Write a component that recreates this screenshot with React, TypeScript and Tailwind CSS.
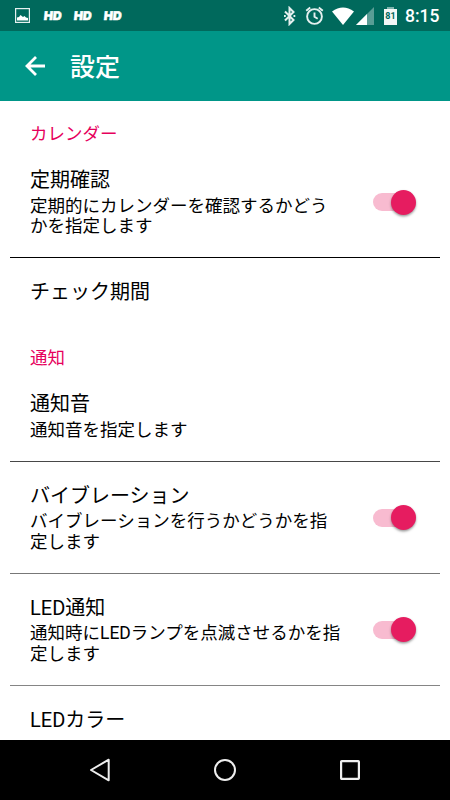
import type { ReactNode } from 'react'

interface SettingRowProps {
  title: string;
  summary?: string;
  hasSwitch?: boolean;
  divider?: string;
}

const Switch = () => {
  return (
    <div className="mb-px flex h-[25px] w-[43px] shrink-0 items-center">
      <div className="h-[18px] w-[38px] shrink-0 rounded-full bg-[#f8bbd0]" />
      <div className="-ml-[20px] h-[25px] w-[25px] shrink-0 rounded-full bg-[#e61c60] shadow-[0_1.5px_2.5px_rgba(0,0,0,0.4)]" />
    </div>
  )
}

const SettingRow: React.FC<SettingRowProps> = ({ title, summary, hasSwitch, divider }) => {
  return (
    <div className={`mx-[10px] flex items-center pb-5 pl-5 pr-[24px] pt-[22px] ${divider ? `border-b ${divider}` : ''}`}>
      <div className="min-w-0 flex-1">
        <h2 className="text-[20px] leading-6">{title}</h2>
        {summary && (
          <p className="mt-[3.5px] mb-[0.5px] max-w-[314px] whitespace-pre-line text-[17.5px] leading-[20.5px]">{summary}</p>
        )}
      </div>
      {hasSwitch && <Switch />}
    </div>
  )
}

const Category = ({ children, className }: { children: ReactNode; className: string }) => {
  return <h3 className={`px-[30px] text-[17.5px] leading-6 text-[#e6005c] ${className}`}>{children}</h3>
}

const StatusBar = () => {
  return (
    <div className="flex h-[31px] shrink-0 items-center justify-between bg-[#00695c] pl-[15px] pr-[10px] text-white">
      <div className="flex items-center">
        <svg width="15" height="15" viewBox="0 0 15 15">
          <rect x="0.6" y="0.6" width="13.8" height="13.8" fill="none" stroke="#e5f0ef" strokeWidth="1.2" />
          <path d="M2 12.500V9.500l2-.5 1.500-2L8 9l1.500-1L11 9.500l2 .5v2.500z" fill="#fff" />
        </svg>
        <div className="ml-[14px] flex gap-[11px] font-['Inter','Liberation_Sans',sans-serif] text-[12px] font-black leading-none [-webkit-text-stroke:0.5px_white]">
          <span className="w-[19px] -skew-x-6">HD</span>
          <span className="w-[19px] -skew-x-6">HD</span>
          <span className="w-[19px] -skew-x-6">HD</span>
        </div>
      </div>
      <div className="flex items-center">
        <svg width="13" height="20" viewBox="0 0 13 20" fill="none" stroke="#e5f0ef" strokeWidth="2">
          <path d="M2 5.500l8.500 8.500-4 4v-16l4 4-8.500 8.500" />
          <path d="M1 10h1.800M10.500 10h1.800" />
        </svg>
        <svg className="ml-[9px]" width="19" height="20" viewBox="0 0 19 20" fill="none" stroke="#e5f0ef" strokeWidth="1.9">
          <circle cx="9.5" cy="10.5" r="7.4" />
          <path d="M9.500 6.500v4.300l3.200 2M1.200 4.700l4-3.200M17.800 4.700l-4-3.200" />
        </svg>
        <svg className="ml-[8px]" width="22" height="18" viewBox="0 0 22 18">
          <path d="M0 4.500Q11-3.500 22 4.500L11 18z" fill="#fff" />
        </svg>
        <svg className="ml-[2px]" width="18" height="18" viewBox="0 0 18 18">
          <path d="M0 18L18 0v18z" fill="#fff" fillOpacity="0.35" />
          <path d="M0 18L11 7v11z" fill="#fff" />
        </svg>
        <div className="ml-[10px] flex w-[13px] flex-col items-center">
          <div className="h-[2px] w-[7px] bg-[#7fb4ad]" />
          <div className="flex h-[16px] w-full items-center justify-center bg-[#f2f7f6] pb-px font-['Roboto',sans-serif] text-[9px] font-bold leading-none text-[#00695c]">
            81
          </div>
        </div>
        <span className="ml-[8px] mt-[2px] w-[35px] whitespace-nowrap text-[17.5px] font-medium leading-none">8:15</span>
      </div>
    </div>
  )
}

const App = () => {
  return (
    <div className="flex h-[800px] w-[450px] flex-col overflow-hidden bg-white font-['Roboto','Noto_Sans_CJK_JP',sans-serif] text-black">
      <StatusBar />
      <header className="flex h-[70px] shrink-0 items-center bg-[#009688] pl-[25px] text-white">
        <svg width="20" height="20" viewBox="0 0 20 20" fill="none" stroke="#fff" strokeWidth="2.8">
          <path d="M20 10H2M11 1L2 10l9 9" />
        </svg>
        <h1 className="ml-[25px] mt-[3px] text-[25px] font-medium leading-8">設定</h1>
      </header>
      <main className="min-h-0 flex-1 overflow-hidden" lang="ja">
        <Category className="pt-[21px]">カレンダー</Category>
        <SettingRow
          title="定期確認"
          summary={'定期的にカレンダーを確認するかどう\nかを指定します'}
          hasSwitch
          divider="border-black"
        />
        <SettingRow title="チェック期間" />
        <Category className="pt-[22px]">通知</Category>
        <SettingRow title="通知音" summary="通知音を指定します" divider="border-[#484848]" />
        <SettingRow
          title="バイブレーション"
          summary={'バイブレーションを行うかどうかを指\n定します'}
          hasSwitch
          divider="border-[#777777]"
        />
        <SettingRow
          title="LED通知"
          summary={'通知時にLEDランプを点滅させるかを指\n定します'}
          hasSwitch
          divider="border-[#858585]"
        />
        <SettingRow title="LEDカラー" />
      </main>
      <nav className="flex h-[60px] shrink-0 items-center justify-between bg-black px-[89px]">
        <svg width="22" height="24" viewBox="0 0 22 24" fill="none" stroke="#eee" strokeWidth="2" strokeLinejoin="round">
          <path d="M2 12L19.7 1.7v20.6z" />
        </svg>
        <svg width="22" height="22" viewBox="0 0 22 22" fill="none" stroke="#eee" strokeWidth="2">
          <circle cx="11" cy="11" r="10" />
        </svg>
        <svg width="22" height="22" viewBox="0 0 22 22" fill="none" stroke="#eee" strokeWidth="2.2">
          <rect x="2.1" y="2.1" width="17.8" height="17.8" rx="0.6" />
        </svg>
      </nav>
    </div>
  )
}

export default App
